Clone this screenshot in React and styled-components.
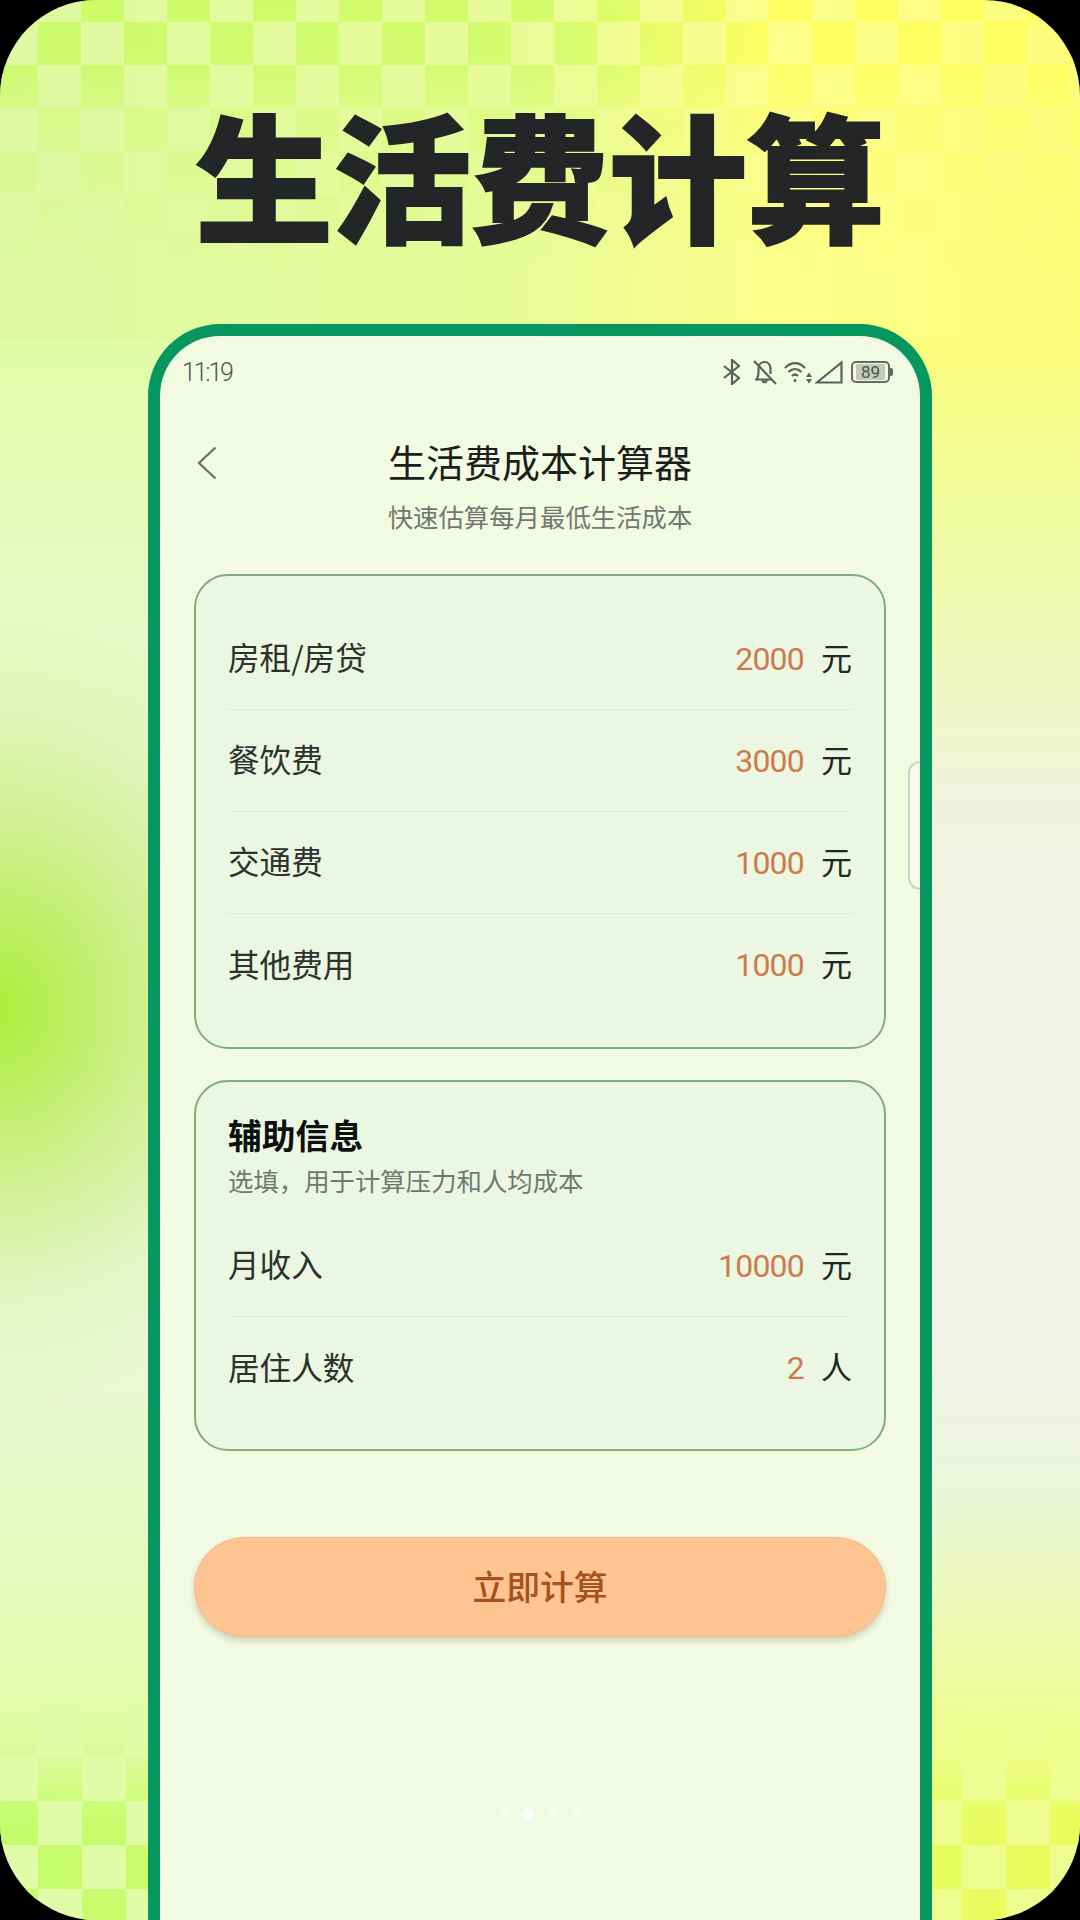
import styled, { createGlobalStyle } from "styled-components";

const GlobalStyle = createGlobalStyle`
  html, body {
    margin: 0;
    padding: 0;
    background: #000;
  }
  * {
    box-sizing: border-box;
  }
`;

const cjk = `"Noto Sans CJK SC", "Noto Sans", sans-serif`;

const Screen = styled.div`
  position: relative;
  width: 1080px;
  height: 1920px;
  overflow: hidden;
  border-radius: 96px;
  font-family: ${cjk};
  background:
    radial-gradient(ellipse 340px 400px at 0 1008px, #aeec3c 0%, rgba(174, 236, 60, 0.74) 22%, rgba(174, 236, 60, 0.44) 45%, rgba(174, 236, 60, 0.15) 72%, rgba(174, 236, 60, 0) 100%),
    linear-gradient(90deg, #def9a2 0%, #e8fb98 48%, #fdfe88 74%, #fdfe7c 100%) 0 0 / 100% 340px no-repeat,
    linear-gradient(180deg, #e0fca6 0, #e0fca6 340px, #e8f8c6 620px, #e8f4d4 900px, #ecf6dc 1300px, #e8f9c6 1500px, #e0fca6 1740px, #e0fca6 100%) 0 0 / 50% 100% no-repeat,
    linear-gradient(180deg, #fdfd7c 0, #fdfd7c 340px, #f0fd9c 500px, #eff3dc 800px, #f0f1e8 1000px, #f0f1e8 1340px, #ecf5d8 1500px, #eefd90 1740px, #eefd90 100%) 100% 0 / 50% 100% no-repeat;
`;

const CheckerTop = styled.div`
  position: absolute;
  left: 0;
  top: 0;
  width: 100%;
  height: 300px;
  background: linear-gradient(90deg, #c8fb62 0%, #d2fb68 52%, #fefe5a 72%, #fefe5a 100%);
  mask-image:
    repeating-conic-gradient(#000 0 25%, transparent 0 50%),
    linear-gradient(180deg, rgba(0, 0, 0, 0.9) 0, rgba(0, 0, 0, 0.8) 65px, rgba(0, 0, 0, 0.35) 115px, rgba(0, 0, 0, 0.14) 200px, transparent 270px);
  mask-size: 86px 86px, 100% 100%;
  mask-position: -5px 22px, 0 0;
  mask-composite: intersect;
`;

const CheckerBottom = styled.div`
  position: absolute;
  left: 0;
  bottom: 0;
  width: 100%;
  height: 220px;
  background: linear-gradient(90deg, #c2fc66 0%, #c8fc66 14%, #e4fd5c 86%, #e6fd56 100%);
  mask-image:
    repeating-conic-gradient(#000 0 25%, transparent 0 50%),
    linear-gradient(180deg, transparent 0, rgba(0, 0, 0, 0.2) 60px, rgba(0, 0, 0, 0.9) 120px);
  mask-size: 88px 88px, 100% 100%;
  mask-position: -6px 57px, 0 0;
  mask-composite: intersect;
`;

const Content = styled.div`
  position: relative;
  display: flex;
  flex-direction: column;
  align-items: center;
  height: 100%;
`;

const Headline = styled.h1`
  margin: 0;
  height: 324px;
  padding-top: 97px;
  font-size: 138px;
  line-height: 150px;
  font-weight: 900;
  color: #232527;
  -webkit-text-stroke: 2px #232527;
  white-space: nowrap;
`;

const Phone = styled.div`
  position: relative;
  flex: 1;
  width: 784px;
  border: 12px solid #05975f;
  border-bottom: 0;
  border-radius: 72px 72px 0 0;
  background: #f3fae2;
  overflow: hidden;
`;

const StatusBar = styled.div`
  display: flex;
  align-items: center;
  justify-content: space-between;
  height: 72px;
  padding: 0 27px 0 22px;
`;

const Time = styled.span`
  font-family: Roboto, sans-serif;
  font-size: 25px;
  font-weight: 300;
  letter-spacing: -2.2px;
  color: #4f534e;
`;

const StatusIcons = styled.div`
  display: flex;
  align-items: center;
`;

const StatusIcon = styled.svg`
  display: block;
  flex: none;
  margin-left: ${(p) => p.$gap || 0}px;
  fill: none;
  stroke: #5c605a;
  stroke-width: 2.2;
`;

const Battery = styled.div`
  position: relative;
  display: flex;
  align-items: center;
  justify-content: center;
  width: 39px;
  height: 22px;
  margin: 0 3px 0 8px;
  border: 2px solid #666a63;
  border-radius: 5px;
  font-family: Roboto, sans-serif;
  font-size: 17px;
  color: #4f534e;
  &::after {
    content: "";
    position: absolute;
    right: -5px;
    top: 5px;
    width: 3px;
    height: 8px;
    border-radius: 0 2px 2px 0;
    background: #666a63;
  }
`;

const BatteryLevel = styled.span`
  display: flex;
  align-items: center;
  justify-content: center;
  width: 29px;
  height: 16px;
  background: #c6cabd;
  border-radius: 1px;
`;

const NavBar = styled.div`
  display: grid;
  grid-template-columns: 1fr auto 1fr;
  align-items: center;
  margin-top: 26px;
  padding: 0 38px;
`;

const BackIcon = styled.svg`
  display: block;
  fill: none;
  stroke: #6b6e68;
  stroke-width: 2.2;
  position: relative;
  top: 2px;
  left: -1px;
`;

const PageTitle = styled.div`
  font-size: 38px;
  line-height: 54px;
  color: #1c1e1c;
`;

const PageSubtitle = styled.div`
  margin-top: 10px;
  text-align: center;
  font-size: 25.4px;
  line-height: 36px;
  color: #72776f;
`;

const Card = styled.div`
  margin: ${(p) => p.$top}px 34px 0;
  padding: 32px 32px ${(p) => p.$bottom}px;
  border: 2px solid #83ab7e;
  border-radius: 34px;
  background: #ebf7e2;
`;

const CardTitle = styled.div`
  margin-top: -2px;
  font-size: 33.8px;
  line-height: 46px;
  font-weight: 700;
  color: #0e100e;
`;

const CardHint = styled.div`
  margin: 5px 0 18px;
  font-size: 25.4px;
  line-height: 34px;
  color: #72776f;
`;

const Row = styled.div`
  display: flex;
  align-items: center;
  height: 102px;
  border-bottom: 1px solid #dfe9da;
  &:last-child {
    border-bottom: 0;
  }
`;

const Label = styled.span`
  flex: 1;
  padding-bottom: 5px;
  font-size: 31.6px;
  color: #2d322c;
`;

const Value = styled.span`
  font-family: Roboto, sans-serif;
  font-size: 32px;
  letter-spacing: -0.8px;
  color: #cd7a4d;
`;

const Unit = styled.span`
  margin-left: 17px;
  padding-bottom: 5px;
  font-size: 31px;
  color: #232723;
`;

const CalcButton = styled.div`
  display: flex;
  align-items: center;
  justify-content: center;
  height: 100px;
  margin: 86px 34px 0;
  padding-bottom: 3px;
  border: 1px solid #f5b88a;
  border-radius: 50px;
  background: #fec491;
  box-shadow: 0 4px 6px rgba(80, 70, 50, 0.22);
  font-size: 33.8px;
  font-weight: 500;
  color: #a5521f;
`;

const Dots = styled.div`
  display: flex;
  justify-content: center;
  gap: 13px;
  margin-top: 171px;
`;

const Dot = styled.span`
  width: 11px;
  height: 12px;
  border-radius: 50%;
  background: #fff;
  opacity: ${(p) => (p.$active ? 1 : 0.3)};
`;

const SideHandle = styled.div`
  position: absolute;
  right: 0;
  top: 425px;
  width: 12px;
  height: 129px;
  border: 2px solid #cfd2c8;
  border-right: 0;
  border-radius: 14px 0 0 14px;
  background: #f6fbee;
`;

const costs = [
  { label: "房租/房贷", value: "2000", unit: "元" },
  { label: "餐饮费", value: "3000", unit: "元" },
  { label: "交通费", value: "1000", unit: "元" },
  { label: "其他费用", value: "1000", unit: "元" },
];

const extras = [
  { label: "月收入", value: "10000", unit: "元" },
  { label: "居住人数", value: "2", unit: "人" },
];

const renderRow = (item) => (
  <Row key={item.label}>
    <Label>{item.label}</Label>
    <Value>{item.value}</Value>
    <Unit>{item.unit}</Unit>
  </Row>
);

const App = () => {
  return (
    <Screen>
      <GlobalStyle />
      <CheckerTop />
      <CheckerBottom />
      <Content>
        <Headline>生活费计算</Headline>
        <Phone>
          <StatusBar>
            <Time>11:19</Time>
            <StatusIcons>
              <StatusIcon width="18" height="26" viewBox="0 0 18 26">
                <path d="M1 7 L16 19 L9 25 V1 L16 7 L1 19" />
              </StatusIcon>
              <StatusIcon $gap={11} width="25" height="26" viewBox="0 0 25 26">
                <path d="M5 20 C6 18 6.500 16 6.500 13 V10 C6.500 6 9 3 12.500 3 C16 3 18.500 6 18.500 10 V15" />
                <path d="M3 20.500 H19" />
                <path d="M10.500 21 C10.500 24 14.500 24 14.500 21" />
                <path d="M2 2 L24 25" />
              </StatusIcon>
              <StatusIcon $gap={7} width="28" height="24" viewBox="0 0 28 24">
                <path d="M1 8 C7 1.500 15 1.500 21 8" />
                <path d="M4.500 12 C8.500 8 13.500 8 17.500 12" />
                <path d="M8 16 C10 14 12 14 14 16" />
                <circle cx="11" cy="20.500" r="1.500" fill="#5c605a" stroke="none" />
                <path d="M25 12.500 L28 17 H22 Z M25 23.500 L28 19 H22 Z" fill="#5c605a" stroke="none" />
              </StatusIcon>
              <StatusIcon $gap={3} width="28" height="24" viewBox="0 0 28 24">
                <path d="M26.500 2.500 V22.500 H2 Z" />
              </StatusIcon>
              <Battery>
                <BatteryLevel>89</BatteryLevel>
              </Battery>
            </StatusIcons>
          </StatusBar>
          <NavBar>
            <BackIcon width="20" height="34" viewBox="0 0 20 34">
              <path d="M18.500 1.500 L2 17 L18.500 32.500" />
            </BackIcon>
            <PageTitle>生活费成本计算器</PageTitle>
          </NavBar>
          <PageSubtitle>快速估算每月最低生活成本</PageSubtitle>
          <Card $top={40} $bottom={31}>
            {costs.map(renderRow)}
          </Card>
          <Card $top={31} $bottom={30}>
            <CardTitle>辅助信息</CardTitle>
            <CardHint>选填，用于计算压力和人均成本</CardHint>
            {extras.map(renderRow)}
          </Card>
          <CalcButton>立即计算</CalcButton>
          <Dots>
            <Dot />
            <Dot $active />
            <Dot />
            <Dot />
          </Dots>
          <SideHandle />
        </Phone>
      </Content>
    </Screen>
  );
};

export default App;
